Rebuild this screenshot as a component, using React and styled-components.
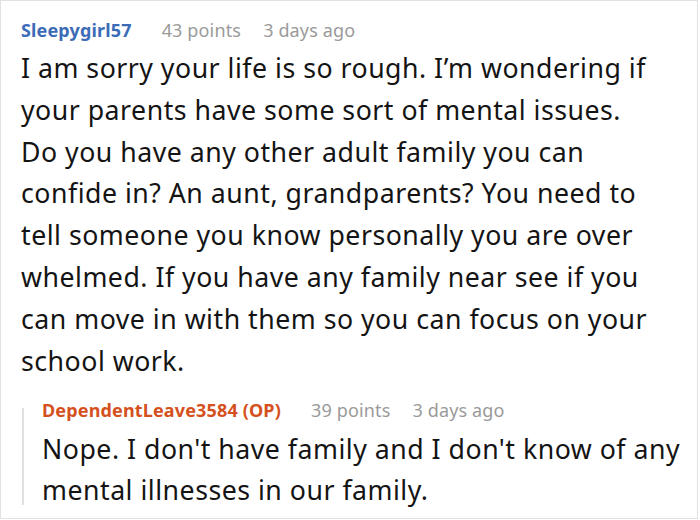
import React from "react";
import styled, { createGlobalStyle } from "styled-components";

const Global = createGlobalStyle`
  html, body { margin: 0; padding: 0; background: #fff; }
  body { font-family: "Noto Sans", "Open Sans", sans-serif; }
`;

const Card = styled.div`
  box-sizing: border-box;
  width: 698px;
  height: 519px;
  border: 1px solid #e2e2e2;
  background: #fff;
  padding: 17px 0 0 20px;
  overflow: hidden;
`;

const Meta = styled.div`
  display: flex;
  align-items: baseline;
  gap: 22px;
  font-size: 18px;
  line-height: 24px;
  letter-spacing: 0.15px;
  white-space: nowrap;
`;

const Author = styled.span`
  font-weight: 700;
  margin-right: 8px;
  color: ${(p) => (p.$op ? "#d4511d" : "#3c6bb8")};
`;

const Info = styled.span`
  color: #9a9a9a;
`;

const Body = styled.p`
  margin: ${(p) => (p.$reply ? "6px 0 0" : "5px 0 0")};
  font-size: 26.7px;
  letter-spacing: 0.5px;
  line-height: ${(p) => (p.$reply ? "41px" : "41.8px")};
  color: #141414;
  white-space: nowrap;
`;

const Reply = styled.div`
  position: relative;
  margin-top: 17px;
  padding-left: 21px;

  &::before {
    content: "";
    position: absolute;
    left: 1px;
    top: 10px;
    bottom: 5px;
    width: 1.5px;
    background: #e0e0e0;
  }
`;

const mainLines = [
  "I am sorry your life is so rough. I’m wondering if",
  "your parents have some sort of mental issues.",
  "Do you have any other adult family you can",
  "confide in? An aunt, grandparents? You need to",
  "tell someone you know personally you are over",
  "whelmed. If you have any family near see if you",
  "can move in with them so you can focus on your",
  "school work.",
];

const replyLines = [
  "Nope. I don't have family and I don't know of any",
  "mental illnesses in our family.",
];

function Lines({ lines }) {
  return lines.map((l, i) => (
    <React.Fragment key={i}>
      {l}
      {i < lines.length - 1 && <br />}
    </React.Fragment>
  ));
}

export default function App() {
  return (
    <>
      <Global />
      <Card>
        <Meta>
          <Author>Sleepygirl57</Author>
          <Info>43 points</Info>
          <Info>3 days ago</Info>
        </Meta>
        <Body>
          <Lines lines={mainLines} />
        </Body>
        <Reply>
          <Meta>
            <Author $op>DependentLeave3584 (OP)</Author>
            <Info>39 points</Info>
            <Info>3 days ago</Info>
          </Meta>
          <Body $reply>
            <Lines lines={replyLines} />
          </Body>
        </Reply>
      </Card>
    </>
  );
}
